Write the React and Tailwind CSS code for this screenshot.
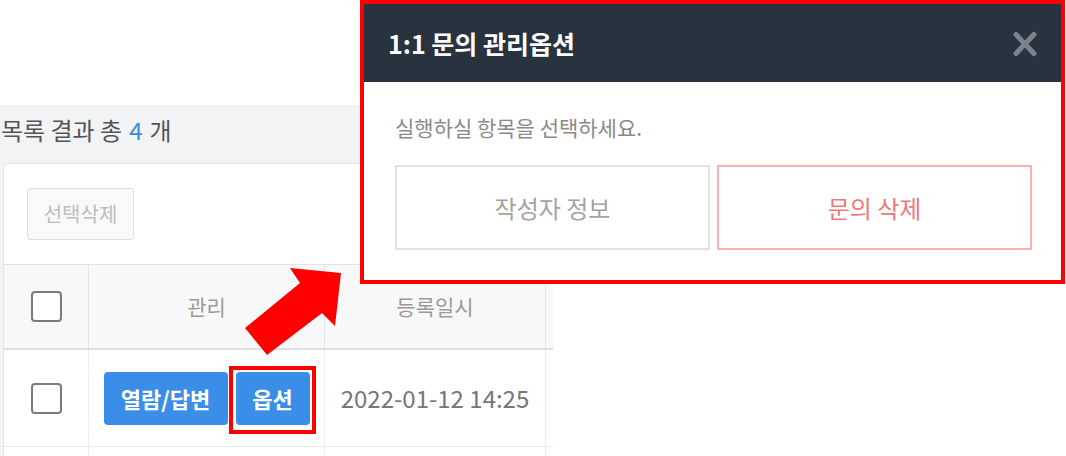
import React from 'react'

const Checkbox = () => (
  <div className="w-[31px] h-[31px] rounded-[4px] border-2 border-[#7a7a7a] bg-white" />
)

const OptionModal = () => (
  <div className="absolute left-[360px] top-0 w-[705px] h-[284px] border-4 border-[#ff0000] bg-white flex flex-col">
    <div className="h-[78px] bg-[#29323f] flex items-center justify-between pl-[24px] pr-[24px]">
      <h2 className="text-white font-bold text-[25px] leading-none">1:1 문의 관리옵션</h2>
      <svg width="24" height="26" viewBox="0 0 24 26" className="mt-[1px]">
        <path d="M3 3.5 L21 22.5 M21 3.5 L3 22.5" stroke="#7b838d" strokeWidth="5" strokeLinecap="round" />
      </svg>
    </div>
    <div className="flex-1 pt-[30px] pl-[31px] pr-[29px]">
      <p className="text-[21px] leading-[30px] text-[#8a8a8a]">실행하실 항목을 선택하세요.</p>
      <div className="grid grid-cols-2 gap-[7px] mt-[23px]">
        <button className="h-[85px] border-2 border-[#e2e2e2] text-[24px] text-[#a3a3a3]">작성자 정보</button>
        <button className="h-[85px] border-2 border-[#f6b0b0] text-[24px] text-[#f07878]">문의 삭제</button>
      </div>
    </div>
  </div>
)

const Arrow = () => (
  <svg className="absolute left-0 top-0 pointer-events-none" width="1066" height="456">
    <polygon
      points="290,268 341,273 335,326 322,313 267,355 245,328 300,283"
      fill="#ff0000"
    />
  </svg>
)

const App = () => {
  return (
    <div className="relative w-[1066px] h-[456px] overflow-hidden bg-white font-['Noto_Sans_CJK_KR','Noto_Sans',sans-serif]">
      <div className="w-[553px] h-full flex flex-col overflow-hidden">
        <div className="h-[105px] shrink-0 bg-white" />
        <div className="flex-1 bg-[#f1f3f5]">
          <div className="h-[50px] mb-[8px] flex items-center pl-[1px] text-[24px] text-[#555]">
            목록 결과 총 <span className="text-[#3f8ad8] mx-[7px]">4</span> 개
          </div>
          <div className="ml-[3px] w-[640px] bg-white border border-[#e2e4e7] rounded-[4px]">
            <div className="pt-[24px] pb-[24px] pl-[23px]">
              <button className="w-[107px] h-[52px] border border-[#dedede] bg-[#f9f9f9] rounded-[3px] text-[20px] text-[#bdbdbd]">
                선택삭제
              </button>
            </div>
            <div className="border-t border-[#e3e3e3]">
              <div className="flex h-[85px] bg-[#f8f8f8] border-b-2 border-[#dedede] text-[21px] text-[#9a9a9a]">
                <div className="w-[85px] border-r border-[#e3e3e3] flex items-center justify-center">
                  <Checkbox />
                </div>
                <div className="w-[236px] border-r border-[#e3e3e3] flex items-center justify-center">관리</div>
                <div className="w-[221px] border-r border-[#e3e3e3] flex items-center justify-center">등록일시</div>
                <div className="flex-1" />
              </div>
              <div className="flex h-[97px] border-b border-[#e8e8e8]">
                <div className="w-[85px] border-r border-[#ececec] flex items-center justify-center">
                  <Checkbox />
                </div>
                <div className="w-[236px] border-r border-[#ececec] flex items-center justify-center gap-[8px]">
                  <button className="w-[124px] h-[53px] rounded-[4px] bg-[#3b8ee8] text-white font-bold text-[22px]">
                    열람/답변
                  </button>
                  <div className="relative">
                    <button className="w-[74px] h-[53px] rounded-[4px] bg-[#3b8ee8] text-white font-bold text-[22px]">
                      옵션
                    </button>
                    <span className="absolute left-[-7px] right-[-6px] top-[-6px] bottom-[-9px] border-4 border-[#ff0000] pointer-events-none" />
                  </div>
                </div>
                <div className="w-[221px] border-r border-[#ececec] flex items-center justify-center text-[24px] text-[#777]">
                  2022-01-12 14:25
                </div>
                <div className="flex-1" />
              </div>
              <div className="flex h-[60px]">
                <div className="w-[85px] border-r border-[#ececec]" />
                <div className="w-[236px] border-r border-[#ececec]" />
                <div className="w-[221px] border-r border-[#ececec]" />
              </div>
            </div>
          </div>
        </div>
      </div>
      <Arrow />
      <OptionModal />
    </div>
  )
}

export default App
